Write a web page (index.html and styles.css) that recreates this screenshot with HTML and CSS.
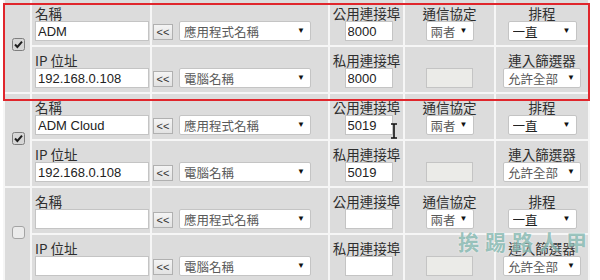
FILE: index.html
```html
<!DOCTYPE html>
<html lang="zh-Hant">

<head>
    <meta charset="UTF-8">
    <meta name="viewport" content="width=device-width, initial-scale=1.0">
    <title>連接埠轉送規則</title>
    <link rel="stylesheet" href="styles.css">
</head>

<body>
    <!-- 轉送規則清單 -->
    <table class="rules">
        <colgroup>
            <col class="c-pick">
            <col class="c-name">
            <col class="c-source">
            <col class="c-port">
            <col class="c-proto">
            <col class="c-sched">
        </colgroup>

        <!-- 規則 1 -->
        <tbody>
            <tr>
                <td class="pick" rowspan="2">
                    <span class="check">
                        <svg width="13" height="13" viewBox="0 0 13 13"><rect x="0.5" y="0.5" width="12" height="12" rx="2" fill="#d6d6d6" stroke="#7e7e7e"/><path d="M3 6.5 L5.4 9 L10 3.6" fill="none" stroke="#1e1e1e" stroke-width="2"/></svg>
                    </span>
                </td>
                <td class="name">
                    <div class="caption">名稱</div>
                    <input type="text" class="field wide" value="ADM">
                </td>
                <td class="source">
                    <div class="pair">
                        <button class="copy">&lt;&lt;</button>
                        <span class="dropdown"><select class="list long"><option>應用程式名稱</option></select></span>
                    </div>
                </td>
                <td class="port">
                    <div class="caption">公用連接埠</div>
                    <input type="text" class="field short" value="8000">
                </td>
                <td class="mid">
                    <div class="caption">通信協定</div>
                    <span class="dropdown"><select class="list tiny"><option>兩者</option></select></span>
                </td>
                <td class="mid">
                    <div class="caption">排程</div>
                    <span class="dropdown"><select class="list medium dark"><option>一直</option></select></span>
                </td>
            </tr>
            <tr>
                <td class="name">
                    <div class="caption">IP 位址</div>
                    <input type="text" class="field wide" value="192.168.0.108">
                </td>
                <td class="source">
                    <div class="pair">
                        <button class="copy">&lt;&lt;</button>
                        <span class="dropdown"><select class="list long"><option>電腦名稱</option></select></span>
                    </div>
                </td>
                <td class="port">
                    <div class="caption">私用連接埠</div>
                    <input type="text" class="field short" value="8000">
                </td>
                <td class="mid">
                    <div class="caption">&nbsp;</div>
                    <span class="blank"></span>
                </td>
                <td class="mid">
                    <div class="caption">連入篩選器</div>
                    <span class="dropdown"><select class="list broad"><option>允許全部</option></select></span>
                </td>
            </tr>
        </tbody>

        <!-- 規則 2 -->
        <tbody>
            <tr>
                <td class="pick" rowspan="2">
                    <span class="check">
                        <svg width="13" height="13" viewBox="0 0 13 13"><rect x="0.5" y="0.5" width="12" height="12" rx="2" fill="#d6d6d6" stroke="#7e7e7e"/><path d="M3 6.5 L5.4 9 L10 3.6" fill="none" stroke="#1e1e1e" stroke-width="2"/></svg>
                    </span>
                </td>
                <td class="name">
                    <div class="caption">名稱</div>
                    <input type="text" class="field wide" value="ADM Cloud">
                </td>
                <td class="source">
                    <div class="pair">
                        <button class="copy">&lt;&lt;</button>
                        <span class="dropdown"><select class="list long"><option>應用程式名稱</option></select></span>
                    </div>
                </td>
                <td class="port">
                    <div class="caption">公用連接埠</div>
                    <input type="text" class="field short" value="5019">
                </td>
                <td class="mid">
                    <div class="caption">通信協定</div>
                    <span class="dropdown"><select class="list tiny"><option>兩者</option></select></span>
                </td>
                <td class="mid">
                    <div class="caption">排程</div>
                    <span class="dropdown"><select class="list medium dark"><option>一直</option></select></span>
                </td>
            </tr>
            <tr>
                <td class="name">
                    <div class="caption">IP 位址</div>
                    <input type="text" class="field wide" value="192.168.0.108">
                </td>
                <td class="source">
                    <div class="pair">
                        <button class="copy">&lt;&lt;</button>
                        <span class="dropdown"><select class="list long"><option>電腦名稱</option></select></span>
                    </div>
                </td>
                <td class="port">
                    <div class="caption">私用連接埠</div>
                    <input type="text" class="field short" value="5019">
                </td>
                <td class="mid">
                    <div class="caption">&nbsp;</div>
                    <span class="blank"></span>
                </td>
                <td class="mid">
                    <div class="caption">連入篩選器</div>
                    <span class="dropdown"><select class="list broad"><option>允許全部</option></select></span>
                </td>
            </tr>
        </tbody>

        <!-- 規則 3 (空白) -->
        <tbody>
            <tr>
                <td class="pick" rowspan="2">
                    <span class="check">
                        <svg width="13" height="13" viewBox="0 0 13 13"><rect x="0.5" y="0.5" width="12" height="12" rx="2.5" fill="#ebebeb" stroke="#a4a4a4"/></svg>
                    </span>
                </td>
                <td class="name">
                    <div class="caption">名稱</div>
                    <input type="text" class="field wide" value="">
                </td>
                <td class="source">
                    <div class="pair">
                        <button class="copy">&lt;&lt;</button>
                        <span class="dropdown"><select class="list long"><option>應用程式名稱</option></select></span>
                    </div>
                </td>
                <td class="port">
                    <div class="caption">公用連接埠</div>
                    <input type="text" class="field short" value="">
                </td>
                <td class="mid">
                    <div class="caption">通信協定</div>
                    <span class="dropdown"><select class="list tiny"><option>兩者</option></select></span>
                </td>
                <td class="mid">
                    <div class="caption">排程</div>
                    <span class="dropdown"><select class="list medium dark"><option>一直</option></select></span>
                </td>
            </tr>
            <tr>
                <td class="name">
                    <div class="caption">IP 位址</div>
                    <input type="text" class="field wide" value="">
                </td>
                <td class="source">
                    <div class="pair">
                        <button class="copy">&lt;&lt;</button>
                        <span class="dropdown"><select class="list long"><option>電腦名稱</option></select></span>
                    </div>
                </td>
                <td class="port">
                    <div class="caption">私用連接埠</div>
                    <input type="text" class="field short" value="">
                </td>
                <td class="mid">
                    <div class="caption">&nbsp;</div>
                    <span class="blank"></span>
                </td>
                <td class="mid">
                    <div class="caption">連入篩選器</div>
                    <span class="dropdown"><select class="list broad"><option>允許全部</option></select></span>
                </td>
            </tr>
        </tbody>
    </table>

    <!-- 標示框、游標與浮水印 -->
    <div class="highlight"></div>
    <svg class="ibeam" width="8" height="16" viewBox="0 0 8 16"><path d="M1 1 H7 M4 1 V15 M1 15 H7" fill="none" stroke="#111" stroke-width="1.6"/></svg>
    <div class="watermark">挨踢路人甲</div>
</body>

</html>
```

FILE: styles.css
```css
/* Estilos básicos */
body {
    margin: 0;
    padding: 0;
    background-color: #fff;
    font-family: "Liberation Sans", "Noto Sans CJK TC", sans-serif;
    color: #333;
    overflow: hidden;
}

.rules {
    table-layout: fixed;
    border-collapse: separate;
    border-spacing: 2px;
    background-color: #f6f6f6;
    margin: -2px 0 0 3px;
    width: 587px;
}

.c-pick { width: 25px; }
.c-name { width: 118px; }
.c-source { width: 176px; }
.c-port { width: 73px; }
.c-proto { width: 89px; }
.c-sched { width: 92px; }

.rules td {
    background-color: #dcdcdc;
    height: 45px;
    box-sizing: border-box;
    padding: 5px 0 0 3px;
    vertical-align: top;
}

.rules td.pick {
    padding: 0;
    vertical-align: middle;
    text-align: center;
}

.check {
    display: inline-block;
    margin: 1px 0 0 1px;
    line-height: 0;
}

.caption {
    font-family: "Noto Sans CJK TC", sans-serif;
    font-size: 13.5px;
    line-height: 16px;
    color: #2e2e2e;
    white-space: nowrap;
}

.field {
    display: block;
    box-sizing: border-box;
    height: 20px;
    margin: 0;
    padding: 0 2px;
    border: 1px solid #c4c4c4;
    background-color: #fff;
    font-family: "Liberation Sans", "Noto Sans CJK TC", sans-serif;
    font-size: 13px;
    color: #222;
}

.wide { width: 114px; }

.short {
    width: 48px;
    margin: 0 auto;
    position: relative;
    left: 2px;
}

.rules td.source {
    padding: 21px 0 0 1px;
}

.pair {
    display: flex;
    align-items: flex-end;
    gap: 6px;
    height: 20px;
}

.copy {
    width: 20px;
    height: 16px;
    margin: 0 0 1px 0;
    padding: 0;
    border: 1px solid #b0b0b0;
    background: linear-gradient(#f4f4f4, #e2e2e2);
    font-family: "Liberation Sans", sans-serif;
    font-size: 11px;
    line-height: 14px;
    color: #333;
}

.rules td.port,
.rules td.mid {
    padding-left: 0;
    text-align: center;
}

.dropdown {
    position: relative;
    display: inline-block;
    vertical-align: top;
    line-height: 0;
}

.dropdown::after {
    content: "▼";
    position: absolute;
    right: 6px;
    top: 6px;
    font-size: 8px;
    line-height: 8px;
    color: #111;
    pointer-events: none;
}

.list {
    appearance: none;
    -webkit-appearance: none;
    box-sizing: border-box;
    height: 20px;
    margin: 0;
    padding: 0 0 0 4px;
    border: 1px solid #c4c4c4;
    border-radius: 2px;
    background-color: #fff;
    font-family: "Noto Sans CJK TC", sans-serif;
    font-size: 12.5px;
    color: #5a5a5a;
}

.long { width: 132px; }
.tiny { width: 48px; }
.medium { width: 69px; }
.broad { width: 78px; }

.dark { color: #222; }

.blank {
    display: inline-block;
    vertical-align: top;
    box-sizing: border-box;
    width: 47px;
    height: 20px;
    border: 1px solid #c4c4c4;
    background-color: #ebebe8;
}

/* 覆蓋層 */
.highlight {
    position: absolute;
    left: 3px;
    top: 3px;
    width: 587px;
    height: 98px;
    box-sizing: border-box;
    border: 2px solid #e0262c;
}

.ibeam {
    position: absolute;
    left: 390px;
    top: 123px;
}

.watermark {
    position: absolute;
    left: 458px;
    top: 228px;
    font-family: "Noto Sans CJK TC", sans-serif;
    font-weight: bold;
    font-size: 21px;
    line-height: 26px;
    letter-spacing: 6px;
    color: rgba(72, 150, 138, 0.55);
    text-shadow: 0 0 2px rgba(255, 255, 255, 0.8);
    white-space: nowrap;
}
```
